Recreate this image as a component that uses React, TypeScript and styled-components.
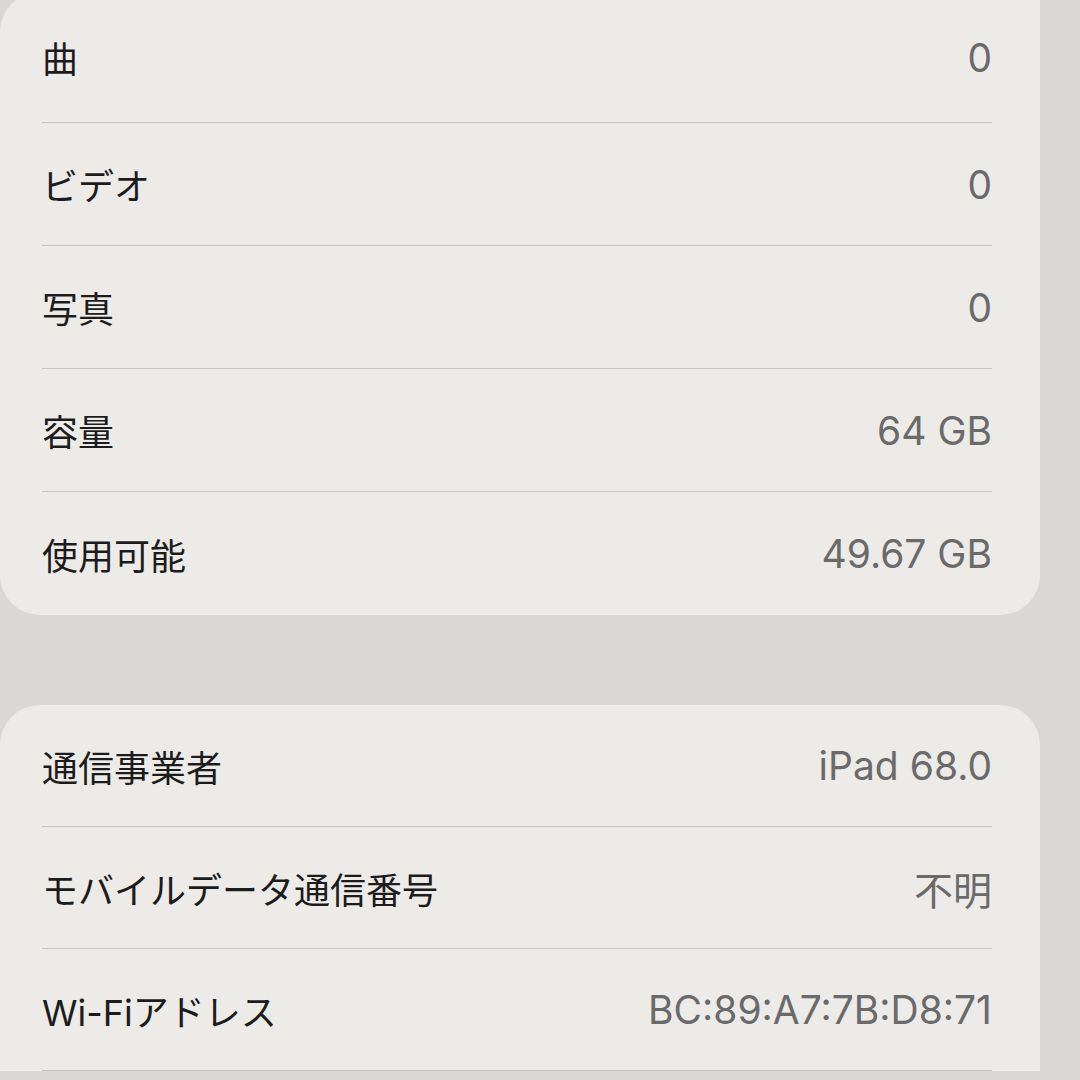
import styled, { createGlobalStyle } from "styled-components";

const GlobalStyle = createGlobalStyle`
  html, body {
    margin: 0;
    padding: 0;
    background-color: #d9d8d4;
  }
`;

const Page = styled.div`
  width: 1080px;
  height: 1080px;
  overflow: hidden;
  display: flex;
  flex-direction: column;
  gap: 90px;
  font-family: "Noto Sans CJK JP", "Noto Sans", sans-serif;
`;

const Card = styled.div<{ $open?: boolean }>`
  width: 1040px;
  background-color: #ecebe7;
  border-radius: ${(props) => (props.$open ? "40px 40px 0 0" : "40px 0 40px 40px")};
  margin-top: ${(props) => (props.$open ? "0" : "-8px")};
  padding: 0 48px 0 42px;
  box-sizing: border-box;
  flex-shrink: 0;
`;

const Row = styled.div<{ $last?: boolean; $h: number }>`
  height: ${(props) => props.$h}px;
  display: flex;
  align-items: center;
  justify-content: space-between;
  border-bottom: ${(props) => (props.$last ? "none" : "1.5px solid #c6c5c1")};
  box-sizing: border-box;
`;

const Label = styled.span`
  font-size: 36px;
  color: #1c1c1c;
  font-family: Inter, "Noto Sans CJK JP", sans-serif;
`;

const Value = styled.span`
  font-size: 39px;
  color: #6a6a6a;
  font-family: Inter, "Noto Sans CJK JP", sans-serif;
`;

const media = [
  ["曲", "0"],
  ["ビデオ", "0"],
  ["写真", "0"],
  ["容量", "64 GB"],
  ["使用可能", "49.67 GB"],
];

const network = [
  ["通信事業者", "iPad 68.0"],
  ["モバイルデータ通信番号", "不明"],
  ["Wi-Fiアドレス", "BC:89:A7:7B:D8:71"],
];

const App = () => {
  return (
    <>
      <GlobalStyle />
      <Page>
        <Card>
          {media.map(([label, value], i) => (
            <Row key={label} $h={i === 0 ? 131 : 123} $last={i === media.length - 1}>
              <Label>{label}</Label>
              <Value>{value}</Value>
            </Row>
          ))}
        </Card>
        <Card $open>
          {network.map(([label, value]) => (
            <Row key={label} $h={122}>
              <Label>{label}</Label>
              <Value>{value}</Value>
            </Row>
          ))}
        </Card>
      </Page>
    </>
  );
};

export default App;
